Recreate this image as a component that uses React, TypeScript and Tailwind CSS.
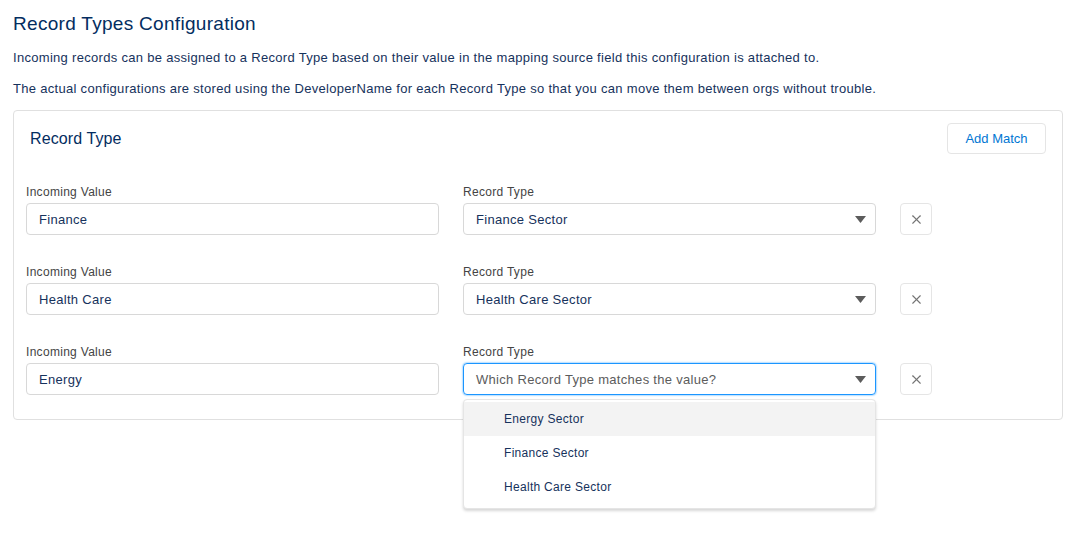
import { X } from 'lucide-react'

const rows = [
  { incoming: 'Finance', recordType: 'Finance Sector', open: false },
  { incoming: 'Health Care', recordType: 'Health Care Sector', open: false },
  { incoming: 'Energy', recordType: '', open: true },
]

const options = ['Energy Sector', 'Finance Sector', 'Health Care Sector']

function Caret() {
  return (
    <svg width="11" height="7" viewBox="0 0 11 7" className="shrink-0">
      <path d="M0 0 H11 L5.5 7 Z" fill="#5c5c5c" />
    </svg>
  )
}

export default function App() {
  return (
    <div className="min-h-screen bg-white px-[13px] pt-[11px] tracking-[0.3px] text-[#16325c]" style={{ fontFamily: '"Liberation Sans", Arial, sans-serif' }}>
      <h1 className="text-[19px] leading-[26px] text-[#032d60]">Record Types Configuration</h1>
      <p className="mt-[12px] text-[13px] leading-[18px]">
        Incoming records can be assigned to a Record Type based on their value in the mapping source field this configuration is attached to.
      </p>
      <p className="mt-[13px] text-[13px] leading-[18px]">
        The actual configurations are stored using the DeveloperName for each Record Type so that you can move them between orgs without trouble.
      </p>

      <div className="mt-[12px] w-[1050px] rounded-[4px] border border-[#e0e0e0] pb-[24px]">
        <div className="flex items-center justify-between pl-4 pr-4 pt-[12px]">
          <h2 className="pt-[1px] text-[16px] tracking-[0.1px] text-[#032d60]">Record Type</h2>
          <button className="h-[31px] w-[99px] rounded-[4px] border border-[#e5e5e5] bg-white text-[13px] font-medium tracking-normal text-[#0176d3]">
            Add Match
          </button>
        </div>

        <div className="mt-[29px] flex flex-col gap-[28px] px-[12px]">
          {rows.map((row, i) => (
            <div key={i} className="grid grid-cols-[413px_413px_32px] items-end gap-x-[24px]">
              <div className="flex flex-col gap-[2px]">
                <label className="text-[12px] leading-[18px] text-[#444444]">Incoming Value</label>
                <div className="flex h-[32px] items-center rounded-[4px] border border-[#d8d8d8] px-[12px] pt-[1px] text-[13px]">
                  {row.incoming}
                </div>
              </div>
              <div className="relative flex flex-col gap-[2px]">
                <label className="text-[12px] leading-[18px] text-[#444444]">Record Type</label>
                {row.open ? (
                  <div className="flex h-[32px] items-center justify-between rounded-[4px] border border-[#1b96ff] pl-[12px] pr-[9px] pt-[1px] text-[13px] text-[#5c5c5c] shadow-[0_0_2px_#1b96ff]">
                    <span>Which Record Type matches the value?</span>
                    <Caret />
                  </div>
                ) : (
                  <div className="flex h-[32px] items-center justify-between rounded-[4px] border border-[#d8d8d8] pl-[12px] pr-[9px] pt-[1px] text-[13px]">
                    <span>{row.recordType}</span>
                    <Caret />
                  </div>
                )}
                {row.open && (
                  <div className="absolute left-0 right-0 top-[56px] z-10 rounded-[4px] border border-[#e5e5e5] bg-white pb-[4px] pt-[2px] shadow-[0_2px_3px_rgba(0,0,0,0.16)]">
                    {options.map((opt, j) => (
                      <div key={opt} className={`flex h-[34px] items-center pl-[40px] text-[12px] ${j === 0 ? 'bg-[#f3f3f3]' : ''}`}>
                        {opt}
                      </div>
                    ))}
                  </div>
                )}
              </div>
              <button className="flex h-[32px] w-[32px] items-center justify-center rounded-[4px] border border-[#e5e5e5] bg-white">
                <X size={15} strokeWidth={1.8} color="#747474" />
              </button>
            </div>
          ))}
        </div>
      </div>
    </div>
  )
}
